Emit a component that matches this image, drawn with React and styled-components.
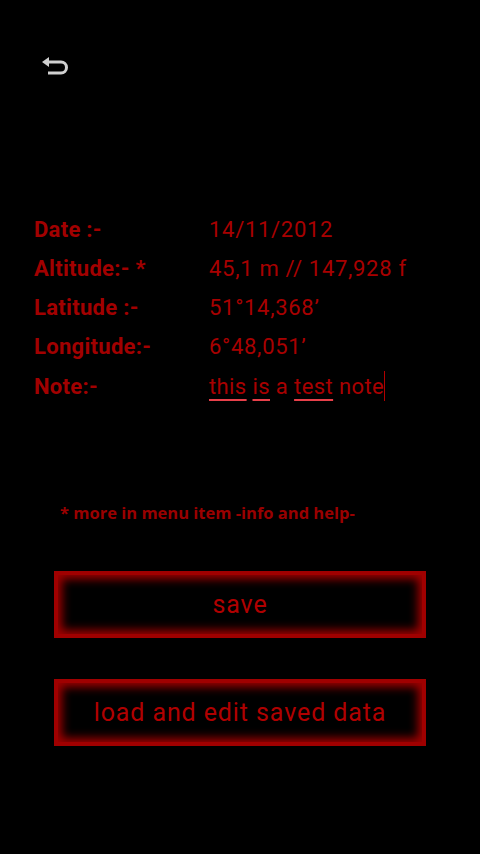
import React from 'react';
import styled, { createGlobalStyle } from 'styled-components';

const GlobalStyle = createGlobalStyle`
  html, body {
    margin: 0;
    padding: 0;
    background: #000;
  }
  body {
    font-family: Roboto, "Liberation Sans", sans-serif;
  }
`;

const Screen = styled.div`
  width: 480px;
  height: 854px;
  background: #000;
  display: flex;
  flex-direction: column;
  overflow: hidden;
`;

const TopBar = styled.div`
  height: 56px;
  padding: 54px 0 0 40px;
  box-sizing: border-box;
`;

const BackButton = styled.button`
  background: none;
  border: none;
  padding: 0;
  width: 30px;
  height: 26px;
  cursor: pointer;
`;

const Fields = styled.div`
  margin-top: 159px;
  padding-left: 34px;
  display: flex;
  flex-direction: column;
  gap: 11px;
`;

const Row = styled.div`
  display: grid;
  grid-template-columns: 175px 1fr;
  height: 28px;
  align-items: center;
`;

const Label = styled.span`
  font-size: 22px;
  font-weight: 700;
  letter-spacing: 0.3px;
  color: #a20000;
  white-space: nowrap;
`;

const Value = styled.span`
  font-size: 22px;
  font-weight: 400;
  letter-spacing: ${(p) => (p.tight ? '0.4px' : '0.7px')};
  color: #a80000;
  white-space: nowrap;
`;

const Misspelled = styled.span`
  text-decoration: underline;
  text-decoration-color: #e8404a;
  text-decoration-thickness: 2px;
  text-underline-offset: 5px;
`;

const Caret = styled.span`
  display: inline-block;
  width: 1px;
  height: 30px;
  background: #b00000;
  vertical-align: -7px;
`;

const Hint = styled.p`
  margin: 102px 0 0 60px;
  font-family: "Open Sans", "DejaVu Sans", sans-serif;
  font-size: 16.5px;
  font-weight: 700;
  color: #9a0000;
`;

const Actions = styled.div`
  margin-top: 47px;
  padding: 0 54px;
  display: flex;
  flex-direction: column;
  gap: 41px;
`;

const RedButton = styled.button`
  height: 67px;
  width: 100%;
  background: #000;
  border: 4px solid #a00000;
  box-shadow: inset 0 0 10px 4px #a00000;
  font-family: Roboto, "Liberation Sans", sans-serif;
  font-size: 25px;
  font-weight: 400;
  letter-spacing: 0.9px;
  color: #b00000;
  cursor: pointer;
`;

const BackIcon = () => (
  <svg width="30" height="26" viewBox="0 0 30 26">
    <path d="M2 8 L9 3 L9 13 Z" fill="#d0d0d0" />
    <path
      d="M8 8 H21 A5.5 5.5 0 0 1 21 19 H8"
      fill="none"
      stroke="#d0d0d0"
      strokeWidth="3"
    />
  </svg>
);

const fields = [
  { label: 'Date :-', value: '14/11/2012' },
  { label: 'Altitude:- *', value: '45,1 m // 147,928 f' },
  { label: 'Latitude :-', value: '51°14,368’' },
  { label: 'Longitude:-', value: '6°48,051’' },
];

export default function App() {
  return (
    <>
      <GlobalStyle />
      <Screen>
        <TopBar>
          <BackButton aria-label="back">
            <BackIcon />
          </BackButton>
        </TopBar>
        <Fields>
          {fields.map((f) => (
            <Row key={f.label}>
              <Label>{f.label}</Label>
              <Value>{f.value}</Value>
            </Row>
          ))}
          <Row>
            <Label>Note:-</Label>
            <Value tight>
              <Misspelled>this</Misspelled> <Misspelled>is</Misspelled> a{' '}
              <Misspelled>test</Misspelled> note
              <Caret />
            </Value>
          </Row>
        </Fields>
        <Hint>* more in menu item -info and help-</Hint>
        <Actions>
          <RedButton>save</RedButton>
          <RedButton>load and edit saved data</RedButton>
        </Actions>
      </Screen>
    </>
  );
}
